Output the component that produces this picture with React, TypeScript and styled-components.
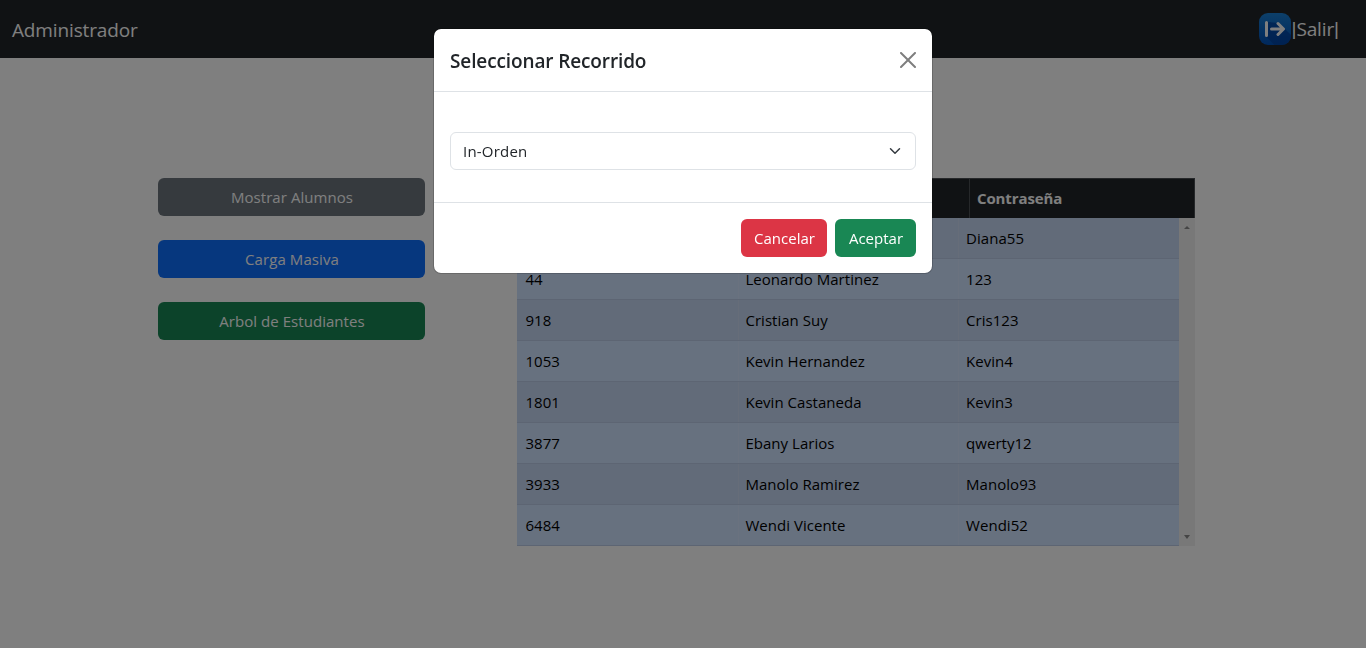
import React from "react";
import styled, { createGlobalStyle } from "styled-components";

const GlobalStyle = createGlobalStyle`
  *, *::before, *::after { box-sizing: border-box; }
  body {
    margin: 0;
    background: #fff;
    color: #212529;
    font-family: "Open Sans", "Noto Sans", sans-serif;
    font-size: 15px;
    line-height: 24px;
    overflow: hidden;
  }
`;

const Page = styled.div`
  height: 648px;
  display: flex;
  flex-direction: column;
`;

const Navbar = styled.nav`
  height: 58px;
  flex: none;
  display: flex;
  align-items: center;
  justify-content: space-between;
  padding: 0 27px 0 12px;
  background: #212529;
  color: #fff;
  font-size: 19px;
`;

const Brand = styled.span`
  letter-spacing: -0.14px;
  line-height: 30px;
  margin-top: 2px;
`;

const Logout = styled.a`
  display: flex;
  align-items: center;
  color: #fff;
  text-decoration: none;
`;

const LogoutText = styled.span`
  display: flex;
  letter-spacing: -0.15px;
  line-height: 30px;
`;

const Bar = styled.span`
  width: 5px;
  font-family: "Liberation Sans", Arial, sans-serif;
`;

const Content = styled.main`
  display: flex;
  align-items: flex-start;
  padding: 120px 0 0 158.4px;
`;

const Actions = styled.div`
  width: 266.2px;
  margin-right: 92.4px;
  display: flex;
  flex-direction: column;
  gap: 24px;
`;

const Button = styled.button<{ $color: string; $width?: number; $spacing?: number }>`
  height: 38px;
  width: ${(p) => (p.$width ? `${p.$width}px` : "100%")};
  padding: 0 0 1px 1px;
  border: 0;
  border-radius: 6px;
  background: ${(p) => p.$color};
  color: #fff;
  font: inherit;
  letter-spacing: ${(p) => p.$spacing ?? 0}px;
  white-space: nowrap;
`;

const TableBox = styled.section`
  width: 678.5px;
`;

const TableHead = styled.div`
  height: 40px;
  display: grid;
  grid-template-columns: 226px 226px 1fr;
  background: #212529;
  color: #fff;
  font-weight: 700;
  border-top: 1px solid #4d5154;
  border-right: 1px solid #4d5154;
`;

const HeadCell = styled.div`
  padding: 7px 8px;
  letter-spacing: -0.1px;
  & + & { border-left: 1px solid #4d5154; padding-left: 7px; }
`;

const Scroller = styled.div`
  display: flex;
  height: 328px;
`;

const Rows = styled.div`
  width: 662px;
`;

const Row = styled.div<{ $striped: boolean }>`
  height: 41px;
  display: grid;
  grid-template-columns: repeat(3, 1fr);
  color: #000;
  background: ${(p) => (p.$striped ? "#c5d7f2" : "#cfe2ff")};
  border-bottom: 1px solid #bacbe6;
`;

const Cell = styled.div`
  padding: 8px 8px 8px 8.5px;
  letter-spacing: 0.03px;
  & + & { border-left: 1px solid rgba(255, 255, 255, 0.12); padding-left: 6.8px; }
`;

const Scrollbar = styled.div`
  width: 16px;
  display: flex;
  flex-direction: column;
  justify-content: space-between;
  align-items: center;
  padding: 8px 0 7px;
  background: #f1f1f1;
`;

const Backdrop = styled.div`
  position: fixed;
  inset: 0;
  background: rgba(0, 0, 0, 0.5);
  display: flex;
  justify-content: center;
  align-items: flex-start;
  padding-top: 28px;
`;

const Modal = styled.div`
  width: 500px;
  background: #fff;
  background-clip: padding-box;
  border: 1px solid rgba(0, 0, 0, 0.175);
  border-radius: 8px;
`;

const ModalHeader = styled.header`
  height: 63px;
  display: flex;
  align-items: center;
  justify-content: space-between;
  padding: 0 16px;
  border-bottom: 1px solid #dee2e6;
`;

const Title = styled.h5`
  margin: 1px 0 0;
  font-size: 19px;
  font-weight: 600;
  letter-spacing: -0.12px;
  line-height: 30px;
`;

const ModalBody = styled.div`
  padding: 40px 16px 32px;
`;

const Select = styled.div`
  height: 38px;
  display: flex;
  align-items: center;
  justify-content: space-between;
  padding: 0 12px 1px;
  border: 1px solid #dee2e6;
  border-radius: 6px;
  letter-spacing: 0.2px;
`;

const ModalFooter = styled.footer`
  height: 71px;
  display: flex;
  justify-content: flex-end;
  align-items: flex-start;
  gap: 8px;
  padding: 16px;
  border-top: 1px solid #dee2e6;
`;

const CloseIcon = styled.svg`
  opacity: 0.5;
`;

const students = [
  ["", "", "Diana55"],
  ["44", "Leonardo Martinez", "123"],
  ["918", "Cristian Suy", "Cris123"],
  ["1053", "Kevin Hernandez", "Kevin4"],
  ["1801", "Kevin Castaneda", "Kevin3"],
  ["3877", "Ebany Larios", "qwerty12"],
  ["3933", "Manolo Ramirez", "Manolo93"],
  ["6484", "Wendi Vicente", "Wendi52"],
];

function LogoutIcon() {
  return (
    <svg width="32" height="32" viewBox="0 0 32 32">
      <defs>
        <linearGradient id="tile" x1="0" y1="0" x2="0" y2="1">
          <stop offset="0" stopColor="#1a80d4" />
          <stop offset="1" stopColor="#0050b8" />
        </linearGradient>
        <clipPath id="tileShape">
          <rect width="32" height="32" rx="9" />
        </clipPath>
      </defs>
      <g clipPath="url(#tileShape)">
        <rect width="32" height="32" fill="url(#tile)" />
        <path d="M6.5 23 L9 9 L20 10 L32 22 V32 H15.5 Z" fill="#003f9c" opacity="0.7" />
      </g>
      <path
        d="M7.5 9.5 V22.5 M12.5 16 H24 M19 10.5 L24.5 16 L19 21.5"
        fill="none"
        stroke="#fff"
        strokeWidth="3"
        strokeLinecap="round"
        strokeLinejoin="round"
      />
    </svg>
  );
}

export default function App() {
  return (
    <>
      <GlobalStyle />
      <Page>
        <Navbar>
          <Brand>Administrador</Brand>
          <Logout>
            <LogoutIcon />
            <LogoutText>
              <Bar>|</Bar>
              <span>Salir</span>
              <Bar>|</Bar>
            </LogoutText>
          </Logout>
        </Navbar>
        <Content>
          <Actions>
            <Button $color="#6c757d" $spacing={0.05}>Mostrar Alumnos</Button>
            <Button $color="#0d6efd" $spacing={0.1}>Carga Masiva</Button>
            <Button $color="#198754" $spacing={0.05}>Arbol de Estudiantes</Button>
          </Actions>
          <TableBox>
            <TableHead>
              <HeadCell />
              <HeadCell />
              <HeadCell>Contraseña</HeadCell>
            </TableHead>
            <Scroller>
              <Rows>
                {students.map((student, i) => (
                  <Row key={i} $striped={i % 2 === 0}>
                    {student.map((value, j) => (
                      <Cell key={j}>{value}</Cell>
                    ))}
                  </Row>
                ))}
              </Rows>
              <Scrollbar>
                <svg width="6" height="3" viewBox="0 0 6 3"><path d="M0 3 L3 0 L6 3Z" fill="#8b8b8b" /></svg>
                <svg width="6" height="4" viewBox="0 0 6 4"><path d="M0 0 L3 4 L6 0Z" fill="#8b8b8b" /></svg>
              </Scrollbar>
            </Scroller>
          </TableBox>
        </Content>
      </Page>
      <Backdrop>
        <Modal>
          <ModalHeader>
            <Title>Seleccionar Recorrido</Title>
            <CloseIcon width="16" height="16" viewBox="0 0 16 16">
              <path d="M.293.293a1 1 0 0 1 1.414 0L8 6.586 14.293.293a1 1 0 1 1 1.414 1.414L9.414 8l6.293 6.293a1 1 0 0 1-1.414 1.414L8 9.414l-6.293 6.293a1 1 0 0 1-1.414-1.414L6.586 8 .293 1.707a1 1 0 0 1 0-1.414z" />
            </CloseIcon>
          </ModalHeader>
          <ModalBody>
            <Select>
              <span>In-Orden</span>
              <svg width="16" height="12" viewBox="0 0 16 16">
                <path d="m2 5 6 6 6-6" fill="none" stroke="#343a40" strokeWidth="2" strokeLinecap="round" strokeLinejoin="round" />
              </svg>
            </Select>
          </ModalBody>
          <ModalFooter>
            <Button $color="#dc3545" $width={86}>Cancelar</Button>
            <Button $color="#198754" $width={81}>Aceptar</Button>
          </ModalFooter>
        </Modal>
      </Backdrop>
    </>
  );
}
